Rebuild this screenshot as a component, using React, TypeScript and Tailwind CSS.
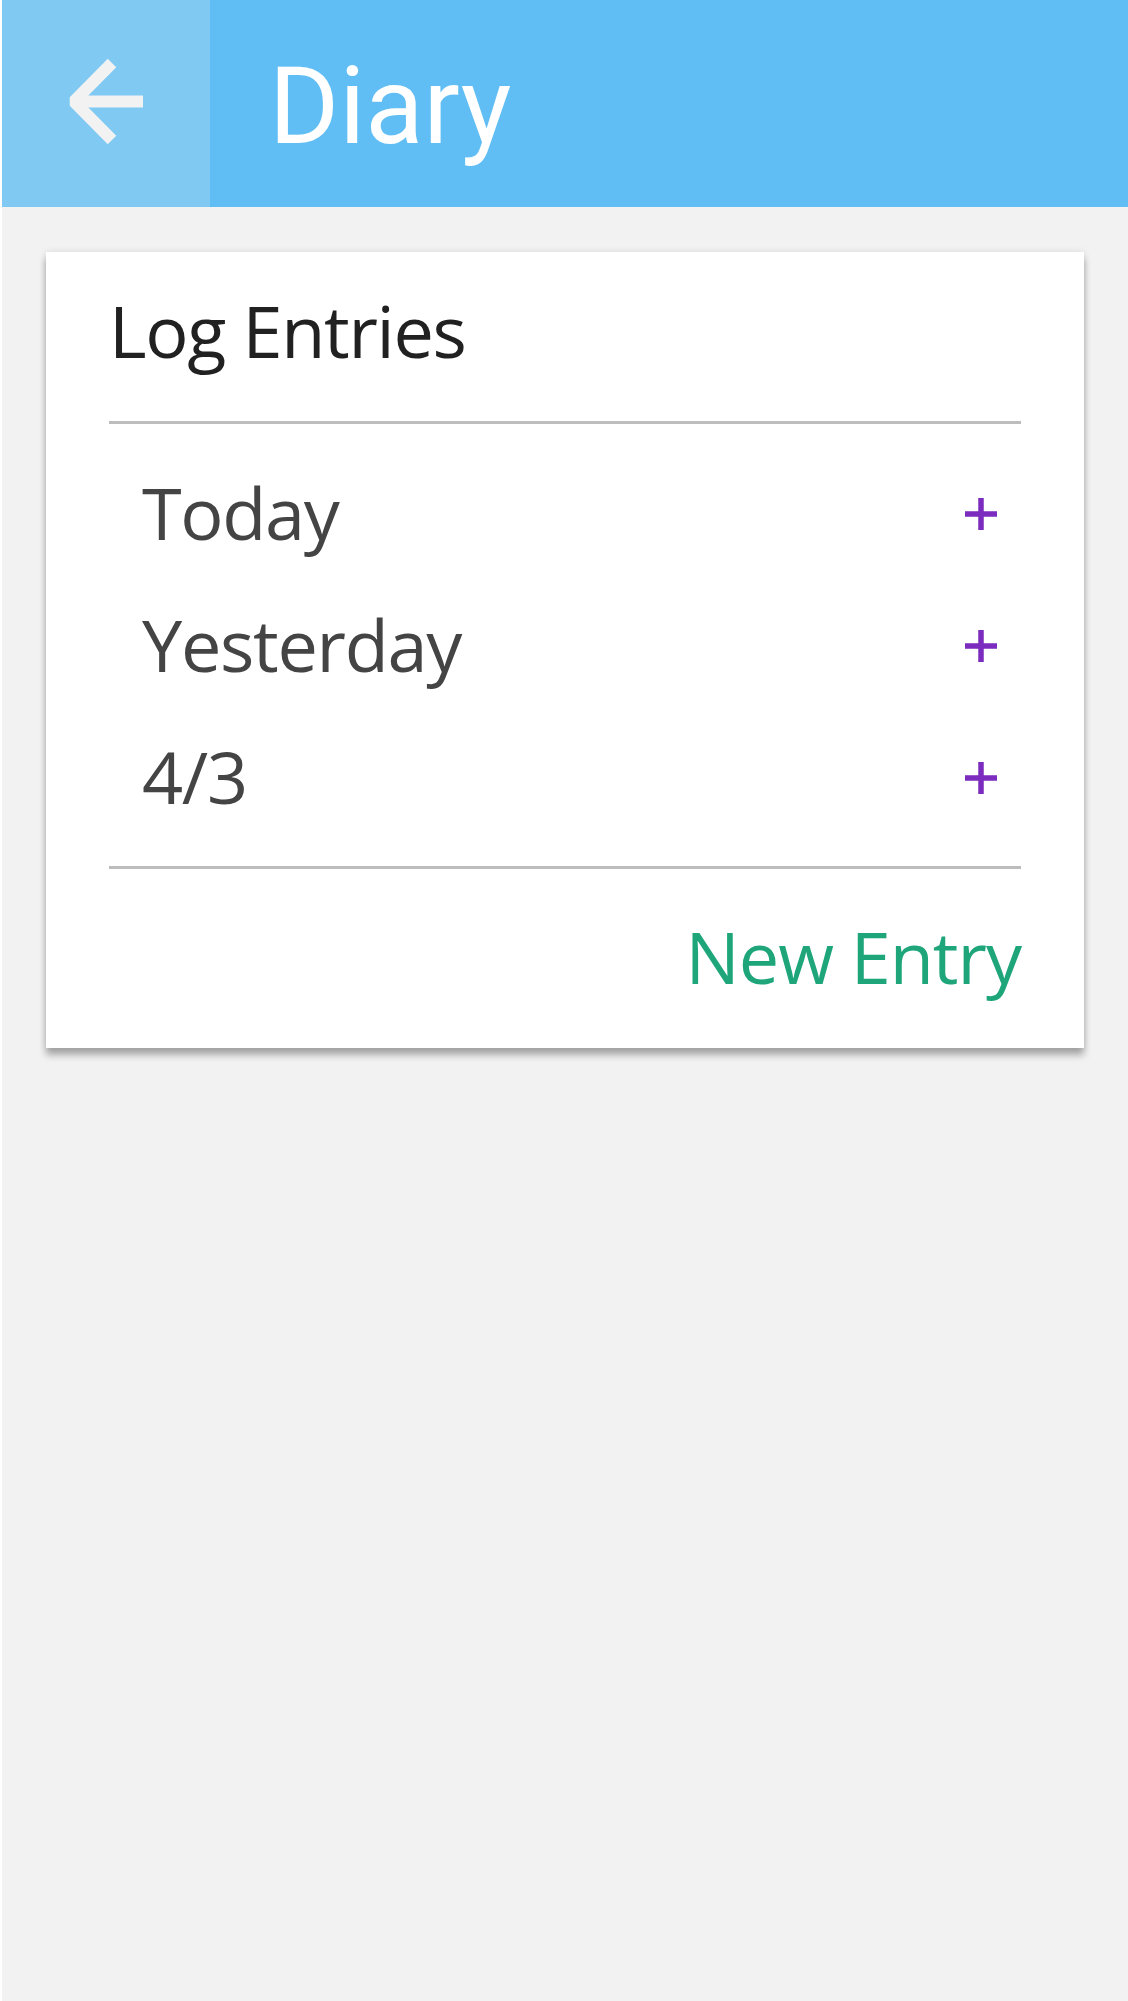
import React from 'react';

const entries = ['Today', 'Yesterday', '4/3'];

function BackArrow() {
  return (
    <svg width="208" height="207" viewBox="2 0 208 207" fill="none">
      <path d="M112 63 L74 101.5 L112 140" stroke="#f2f2f2" strokeWidth="12" strokeLinejoin="bevel" />
      <path d="M74 101.5 H143" stroke="#f2f2f2" strokeWidth="12" />
    </svg>
  );
}

function PlusIcon() {
  return (
    <svg width="32" height="32" viewBox="0 0 32 32" className="mt-[4px]">
      <path d="M16 0 V32 M0 16 H32" stroke="#7b2cbf" strokeWidth="5.5" />
    </svg>
  );
}

export default function App() {
  return (
    <div className="min-h-[2001px] flex bg-[#f2f2f2]">
      <div className="w-[2px] bg-white shrink-0" />
      <div className="flex-1 flex flex-col">
        <header className="h-[207px] flex bg-[#60bef4]">
          <button className="w-[208px] h-full bg-[#7fc9f3] flex items-center justify-center">
            <BackArrow />
          </button>
          <div className="flex items-center pl-[59px] pt-[6px]">
            <h1 className="text-[107px] leading-none text-white font-['Roboto',sans-serif]">Diary</h1>
          </div>
        </header>

        <main className="pt-[45px] pl-[44px] pr-[44px]">
          <div className="bg-white shadow-[0_7px_7px_rgba(0,0,0,0.3),0_0_7px_rgba(0,0,0,0.1)] px-[63px] pt-[42px] pb-[56px] font-['Open_Sans',sans-serif] tracking-[-1.3px]">
            <h2 className="text-[72px] leading-none text-[#212121]">Log Entries</h2>
            <div className="h-[3px] bg-[#bdbdbd] mt-[55px]" />

            <ul className="pt-[22px] pb-[24px]">
              {entries.map((e) => (
                <li key={e} className="h-[132px] flex items-center justify-between pl-[33px] pr-[24px]">
                  <span className="text-[72px] leading-none text-[#444444]">{e}</span>
                  <PlusIcon />
                </li>
              ))}
            </ul>

            <div className="h-[3px] bg-[#bdbdbd]" />
            <div className="flex justify-end pt-[51px]">
              <button className="text-[72px] leading-none text-[#1fa57a] tracking-[-1px]">New Entry</button>
            </div>
          </div>
        </main>
      </div>
    </div>
  );
}
